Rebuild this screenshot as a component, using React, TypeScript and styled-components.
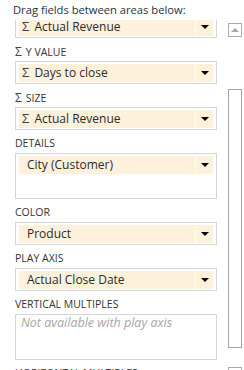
import React from "react";
import styled, { createGlobalStyle } from "styled-components";

const Global = createGlobalStyle`
  html, body { margin: 0; padding: 0; background: #ffffff; }
  body { font-family: "Segoe UI", "Open Sans", sans-serif; }
  * { box-sizing: border-box; }
`;

const Pane = styled.div`
  width: 244px;
  height: 370px;
  overflow: hidden;
  display: grid;
  grid-template-rows: 20px 1fr;
  background: #ffffff;
`;

const Header = styled.div`
  padding: 2px 0 0 13px;
  font-size: 11.2px;
  line-height: 15px;
  color: #283040;
  white-space: nowrap;
`;

const Body = styled.div`
  display: grid;
  grid-template-columns: 228px 14px;
  min-height: 0;
`;

const Viewport = styled.div`
  overflow: hidden;
  min-height: 0;
`;

const Content = styled.div`
  margin-top: -5px;
  padding-left: 15px;
  width: 217px;
  display: flex;
  flex-direction: column;
`;

const Label = styled.div`
  height: 23px;
  padding-top: 7px;
  font-size: 10.5px;
  line-height: 13px;
  color: #333333;
  white-space: nowrap;
  display: flex;
  align-items: baseline;
  gap: 4px;
`;

const Box = styled.div<{ $tall?: boolean; $empty?: boolean }>`
  height: ${(p) => (p.$tall ? 46 : 23)}px;
  border: 1px solid #d6d6d6;
  padding: ${(p) => (p.$empty ? "0 3px" : "2px 3px 1px 3px")};
  background: #ffffff;
`;

const Field = styled.div`
  height: 18px;
  display: flex;
  background: #fdf1dc;
`;

const FieldName = styled.div<{ $sigma?: boolean }>`
  flex: 1;
  padding-left: ${(p) => (p.$sigma ? 3 : 8)}px;
  font-size: 12px;
  line-height: 17px;
  color: #2b2b2b;
  white-space: nowrap;
  overflow: hidden;
  display: flex;
  align-items: baseline;
  gap: 5px;
  border-right: 1px solid #ffffff;
`;

const Sigma = styled.span<{ $big?: boolean }>`
  color: #444444;
  font-size: ${(p) => (p.$big ? 13 : 12)}px;
`;

const DropButton = styled.div`
  width: 17px;
  display: flex;
  align-items: flex-start;
  justify-content: center;
  padding-top: 7px;
`;

const Placeholder = styled.div`
  padding-left: 2px;
  font-size: 12.5px;
  line-height: 15px;
  font-style: italic;
  color: #a6a6a6;
  white-space: nowrap;
`;

const ScrollBar = styled.div`
  display: flex;
  flex-direction: column;
  padding-top: 3px;
`;

const ScrollButton = styled.div`
  height: 14px;
  flex: none;
  border: 1px solid #ababab;
  background: #ffffff;
  display: flex;
  align-items: center;
  justify-content: center;
`;

const Track = styled.div<{ $h: number }>`
  height: ${(p) => p.$h}px;
  flex: none;
`;

const Thumb = styled.div`
  height: 259px;
  flex: none;
  border: 1px solid #a3a3a3;
  background: #ffffff;
`;

const DownArrow = () => (
  <svg width="8" height="4" viewBox="0 0 8 4">
    <polygon points="0,0 8,0 4,4" fill="#000000" />
  </svg>
);

const UpArrow = () => (
  <svg width="8" height="4" viewBox="0 0 8 4">
    <polygon points="0,4 8,4 4,0" fill="#a6a6a6" />
  </svg>
);

type Section = {
  label?: string;
  sigmaLabel?: boolean;
  value?: string;
  sigmaValue?: boolean;
  placeholder?: string;
  tall?: boolean;
};

const sections: Section[] = [
  { value: "Actual Revenue", sigmaValue: true },
  { label: "Y VALUE", sigmaLabel: true, value: "Days to close", sigmaValue: true },
  { label: "SIZE", sigmaLabel: true, value: "Actual Revenue", sigmaValue: true },
  { label: "DETAILS", value: "City (Customer)", tall: true },
  { label: "COLOR", value: "Product" },
  { label: "PLAY AXIS", value: "Actual Close Date" },
  { label: "VERTICAL MULTIPLES", placeholder: "Not available with play axis", tall: true },
  { label: "HORIZONTAL MULTIPLES", placeholder: "Not available with play axis", tall: true },
];

export default function App() {
  return (
    <>
      <Global />
      <Pane>
        <Header>Drag fields between areas below:</Header>
        <Body>
          <Viewport>
            <Content>
              {sections.map((s, i) => (
                <React.Fragment key={i}>
                  {s.label && (
                    <Label>
                      {s.sigmaLabel && <Sigma>Σ</Sigma>}
                      <span>{s.label}</span>
                    </Label>
                  )}
                  <Box $tall={s.tall} $empty={!s.value}>
                    {s.value ? (
                      <Field>
                        <FieldName $sigma={s.sigmaValue}>
                          {s.sigmaValue && <Sigma $big>Σ</Sigma>}
                          <span>{s.value}</span>
                        </FieldName>
                        <DropButton>
                          <DownArrow />
                        </DropButton>
                      </Field>
                    ) : (
                      <Placeholder>{s.placeholder}</Placeholder>
                    )}
                  </Box>
                </React.Fragment>
              ))}
            </Content>
          </Viewport>
          <ScrollBar>
            <ScrollButton>
              <UpArrow />
            </ScrollButton>
            <Track $h={52} />
            <Thumb />
            <Track $h={19} />
            <ScrollButton />
          </ScrollBar>
        </Body>
      </Pane>
    </>
  );
}
